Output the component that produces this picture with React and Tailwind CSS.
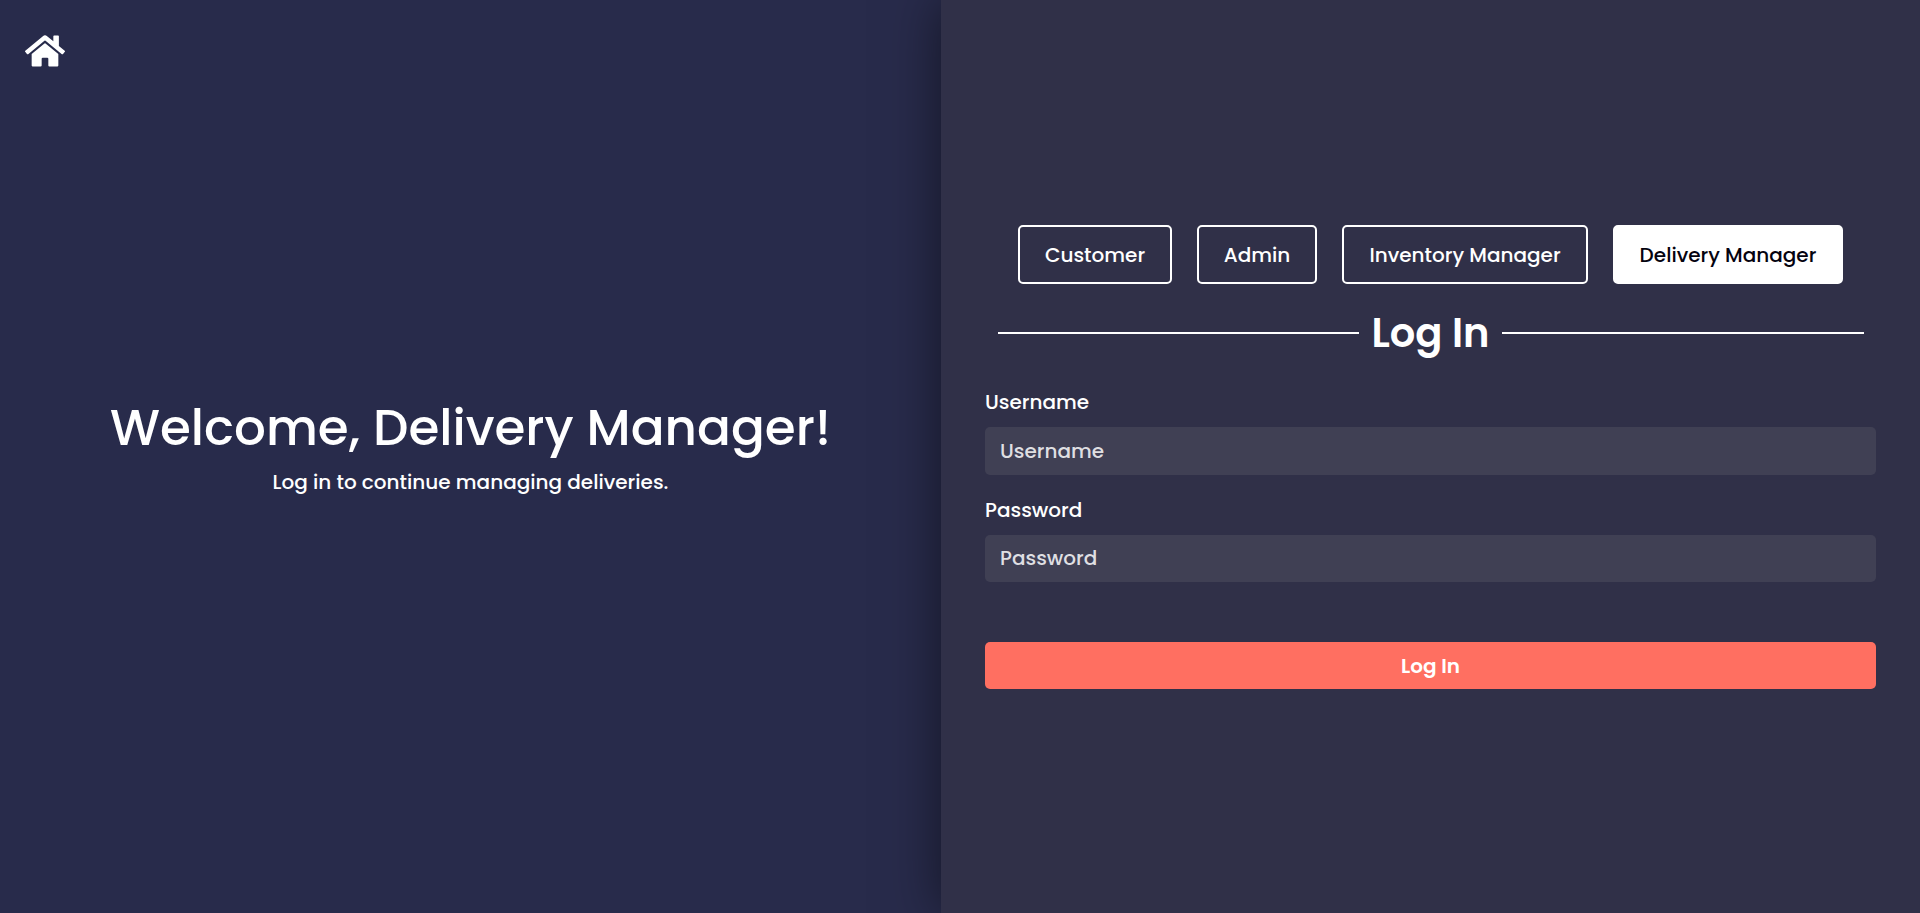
import { FaHome } from "react-icons/fa";

const roles = [
  { label: "Customer", box: "w-[154px]" },
  { label: "Admin", box: "w-[120px]" },
  { label: "Inventory Manager", box: "w-[246px]" },
  { label: "Delivery Manager", box: "w-[230px]", active: true },
];

function Field({ label, type, height }) {
  return (
    <label className="block">
      <span className="block h-10 text-xl leading-[30px]">{label}</span>
      <input
        type={type}
        placeholder={label}
        className={`${height} block w-full rounded-[5px] bg-[#404054] px-[15px] text-xl text-white outline-none placeholder:text-[#dfdfe2]`}
      />
    </label>
  );
}

export default function App() {
  return (
    <div className="flex h-[913px] overflow-hidden bg-[#282b4b] font-['Poppins','Inter',sans-serif] font-medium text-white">
      <section className="flex w-[941px] shrink-0 flex-col">
        <a href="#" aria-label="Home" className="mt-[31px] ml-[25px] block size-10">
          <FaHome className="size-10" />
        </a>
        <div className="mt-[319px] flex flex-col items-center whitespace-nowrap">
          <h1 className="h-[75px] text-[50px] leading-[75px]">Welcome, Delivery Manager!</h1>
          <p className="text-xl leading-[34px]">Log in to continue managing deliveries.</p>
        </div>
      </section>
      <main className="flex flex-1 flex-col bg-[#303048] px-11 pt-[225px] shadow-[0_0_50px_rgba(0,0,0,0.5)]">
        <nav className="flex justify-center gap-[25px]">
          {roles.map((r) => (
            <button
              key={r.label}
              className={`${r.box} h-[59px] shrink-0 rounded-[5px] border-2 border-white text-xl whitespace-nowrap ${r.active ? "bg-white text-[#05030f]" : ""}`}
            >
              {r.label}
            </button>
          ))}
        </nav>
        <div className="mt-[19px] flex h-[60px] items-center px-3">
          <span className="ml-px h-0.5 w-[361px] bg-white" />
          <h2 className="flex-1 text-center text-[40px] leading-[60px] font-semibold">Log In</h2>
          <span className="h-0.5 w-[362px] bg-white" />
        </div>
        <form className="mt-6" onSubmit={(e) => e.preventDefault()}>
          <Field label="Username" type="text" height="h-12" />
          <div className="h-5" />
          <Field label="Password" type="password" height="h-[47px] pb-px" />
          <button className="mt-[60px] block h-[47px] w-full rounded-[5px] bg-[#ff6f61] text-xl font-semibold">Log In</button>
        </form>
      </main>
    </div>
  );
}
